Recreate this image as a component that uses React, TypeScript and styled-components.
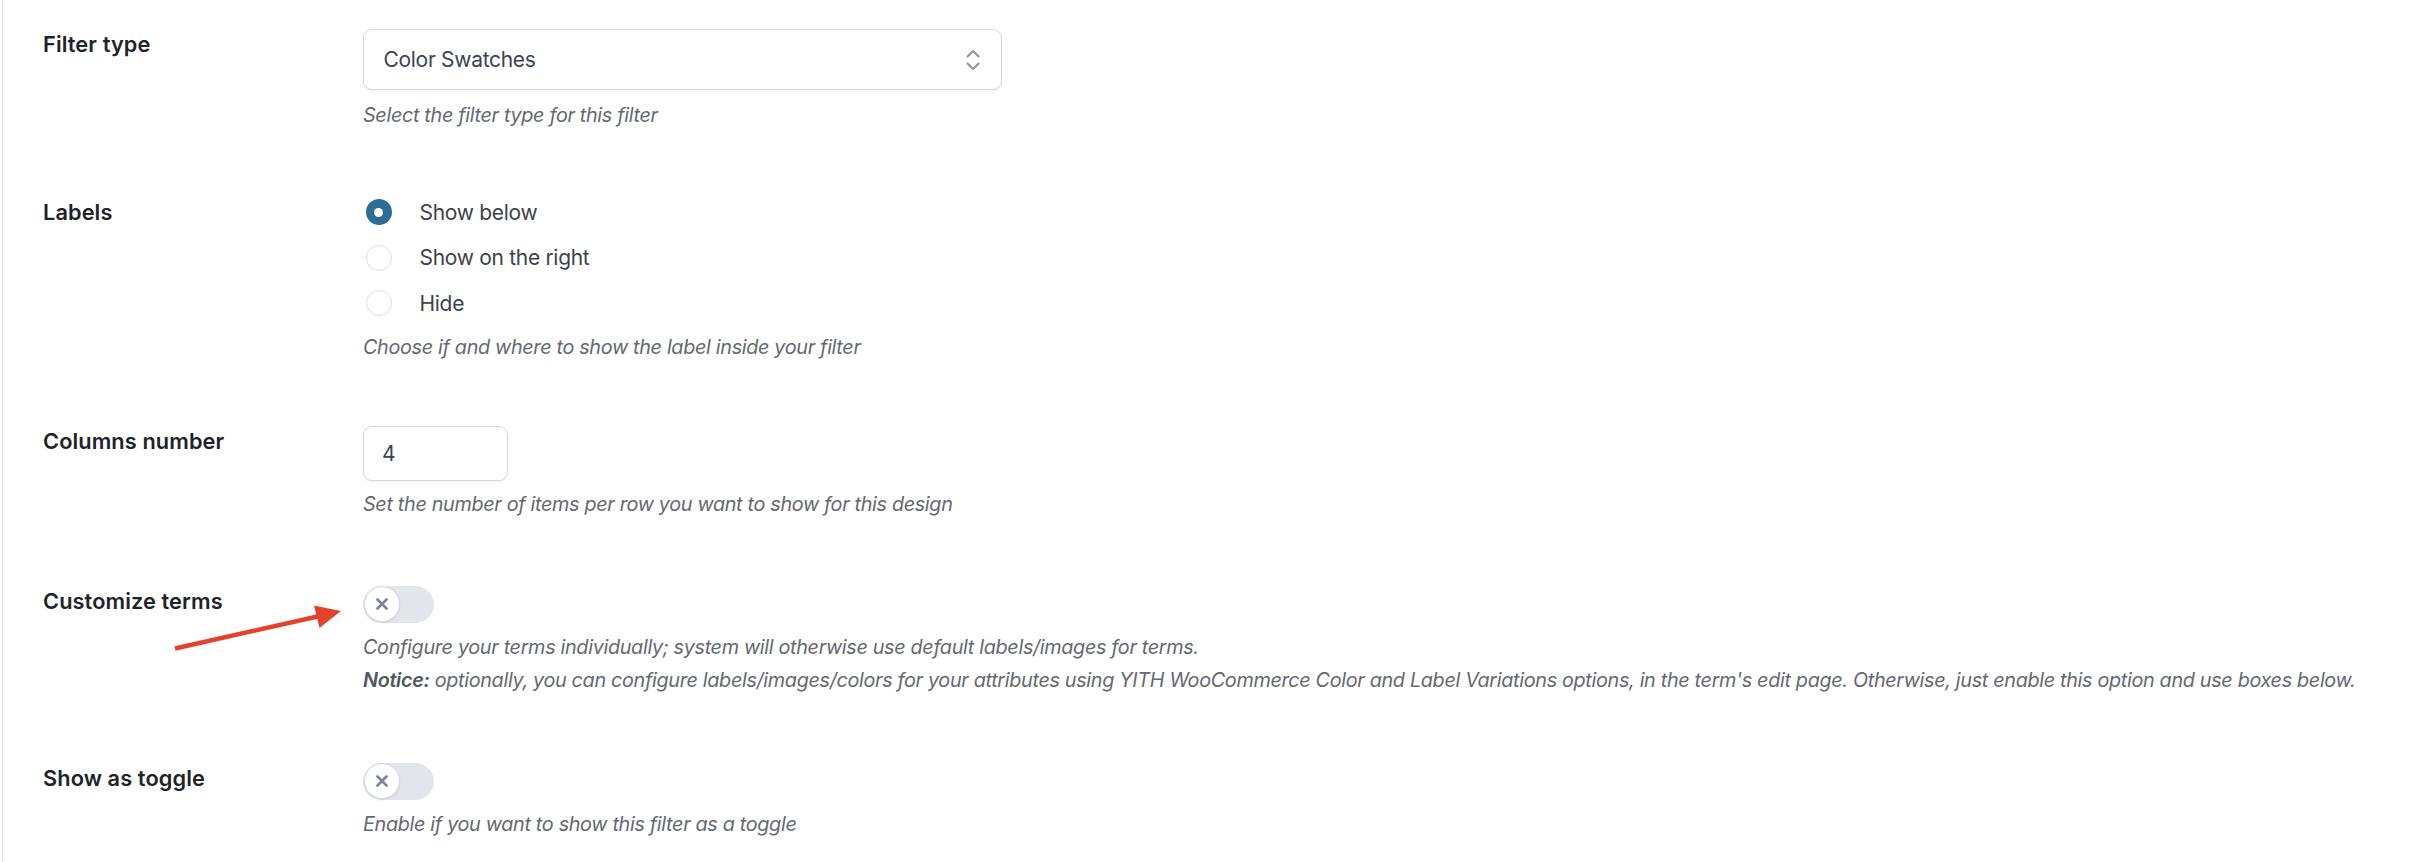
import React from "react";
import styled, { createGlobalStyle } from "styled-components";

const GlobalStyle = createGlobalStyle`
  html, body {
    margin: 0;
    padding: 0;
    background: #ffffff;
  }
  body {
    font-family: Inter, "Noto Sans", Roboto, sans-serif;
    -webkit-font-smoothing: antialiased;
  }
  * { box-sizing: border-box; }
`;

const Root = styled.div`
  position: relative;
  width: 2436px;
  min-height: 862px;
`;

const Panel = styled.div`
  margin-left: 2px;
  border-left: 1.5px solid #e3e6ea;
  min-height: 862px;
  padding: 29px 0 0 40px;
  display: flex;
  flex-direction: column;
  gap: 65px;
`;

const Row = styled.div<{ $shift?: number }>`
  display: grid;
  grid-template-columns: 320px 1fr;
  align-items: start;
  margin-top: ${(p) => p.$shift ?? 0}px;
`;

const Label = styled.div`
  font-size: 21.75px;
  font-weight: 600;
  line-height: 30px;
  color: #1f2328;
  letter-spacing: 0.1px;
`;

const Field = styled.div`
  display: flex;
  flex-direction: column;
  align-items: flex-start;
`;

const Hint = styled.p<{ $gap?: number }>`
  margin: ${(p) => p.$gap ?? 9}px 0 0 0;
  font-size: 19.8px;
  font-style: italic;
  line-height: 32.6px;
  color: #646970;
  letter-spacing: -0.32px;

  & + & {
    margin-top: 0;
  }

  strong {
    font-weight: 600;
    color: #50575e;
  }
`;

const Select = styled.div`
  width: 639px;
  height: 61px;
  border: 1.5px solid #d3d7dd;
  border-radius: 9px;
  background: #fff;
  box-shadow: 0 1.5px 2px rgba(0, 0, 0, 0.04);
  display: flex;
  align-items: center;
  justify-content: space-between;
  padding: 0 21px 0 19.5px;
`;

const ControlText = styled.span`
  font-size: 21px;
  color: #3c4350;
  letter-spacing: -0.3px;
`;

const RadioList = styled.div`
  display: flex;
  flex-direction: column;
  gap: 15.5px;
`;

const RadioItem = styled.label`
  display: flex;
  align-items: center;
  height: 30px;
  gap: 28px;
  padding-left: 2.5px;
  font-size: 21px;
  color: #3c434a;
  letter-spacing: -0.3px;
`;

const RadioDot = styled.span<{ $checked?: boolean }>`
  width: 26px;
  height: 26px;
  border-radius: 50%;
  flex: none;
  background: ${(p) => (p.$checked ? "#2e6e96" : "#ffffff")};
  border: ${(p) => (p.$checked ? "none" : "1.5px solid #dcdde0")};
  display: flex;
  align-items: center;
  justify-content: center;

  &::after {
    content: "";
    display: ${(p) => (p.$checked ? "block" : "none")};
    width: 9px;
    height: 9px;
    border-radius: 50%;
    background: #fff;
  }
`;

const NumberInput = styled.div`
  width: 145px;
  height: 55px;
  border: 1.5px solid #d3d7dd;
  border-radius: 9px;
  background: #fff;
  box-shadow: 0 1.5px 2px rgba(0, 0, 0, 0.04);
  display: flex;
  align-items: center;
  padding-left: 18px;
`;

const Track = styled.div`
  width: 71px;
  height: 37px;
  border-radius: 18.5px;
  background: #e2e6ec;
  display: flex;
  align-items: center;
  padding-left: 0.5px;
`;

const Knob = styled.div`
  width: 36px;
  height: 36px;
  border-radius: 50%;
  background: #ffffff;
  border: 1px solid #d2d7de;
  box-shadow: 0 1px 2px rgba(0, 0, 0, 0.08);
  display: flex;
  align-items: center;
  justify-content: center;
`;

const ArrowLayer = styled.svg`
  position: absolute;
  left: 0;
  top: 0;
  pointer-events: none;
`;

const Chevrons = () => (
  <svg width="14" height="22" viewBox="0 0 14 22" fill="none">
    <path d="M1.5 7.5 L7 2 L12.5 7.5" stroke="#8b94a2" strokeWidth="2" strokeLinecap="round" strokeLinejoin="round" />
    <path d="M1.5 14.5 L7 20 L12.5 14.5" stroke="#8b94a2" strokeWidth="2" strokeLinecap="round" strokeLinejoin="round" />
  </svg>
);

const Toggle = () => (
  <Track>
    <Knob>
      <svg width="12" height="12" viewBox="0 0 12 12">
        <path d="M1.5 1.5 L10.5 10.5 M10.5 1.5 L1.5 10.5" stroke="#7b8598" strokeWidth="2.6" strokeLinecap="round" />
      </svg>
    </Knob>
  </Track>
);

export default function App() {
  return (
    <Root>
      <GlobalStyle />
      <Panel>
        <Row>
          <Label>Filter type</Label>
          <Field>
            <Select>
              <ControlText>Color Swatches</ControlText>
              <Chevrons />
            </Select>
            <Hint $gap={8.5}>Select the filter type for this filter</Hint>
          </Field>
        </Row>

        <Row $shift={1}>
          <Label>Labels</Label>
          <Field>
            <RadioList>
              <RadioItem>
                <RadioDot $checked />
                Show below
              </RadioItem>
              <RadioItem>
                <RadioDot />
                Show on the right
              </RadioItem>
              <RadioItem>
                <RadioDot />
                Hide
              </RadioItem>
            </RadioList>
            <Hint $gap={13}>Choose if and where to show the label inside your filter</Hint>
          </Field>
        </Row>

        <Row $shift={-3}>
          <Label>Columns number</Label>
          <Field>
            <NumberInput>
              <ControlText>4</ControlText>
            </NumberInput>
            <Hint $gap={7.5}>Set the number of items per row you want to show for this design</Hint>
          </Field>
        </Row>

        <Row>
          <Label>Customize terms</Label>
          <Field>
            <Toggle />
            <Hint $gap={8.5}>
              Configure your terms individually; system will otherwise use default labels/images for terms.
            </Hint>
            <Hint>
              <strong>Notice:</strong> optionally, you can configure labels/images/colors for your attributes using
              YITH WooCommerce Color and Label Variations options, in the term's edit page. Otherwise, just enable this
              option and use boxes below.
            </Hint>
          </Field>
        </Row>

        <Row $shift={1.5}>
          <Label>Show as toggle</Label>
          <Field>
            <Toggle />
            <Hint $gap={8}>Enable if you want to show this filter as a toggle</Hint>
          </Field>
        </Row>
      </Panel>

      <ArrowLayer width="400" height="700" viewBox="0 0 400 700">
        <line x1="175" y1="648.5" x2="322" y2="615.5" stroke="#e2432a" strokeWidth="4.5" />
        <polygon points="341,611 314,605.5 319.5,628" fill="#e2432a" />
      </ArrowLayer>
    </Root>
  );
}
